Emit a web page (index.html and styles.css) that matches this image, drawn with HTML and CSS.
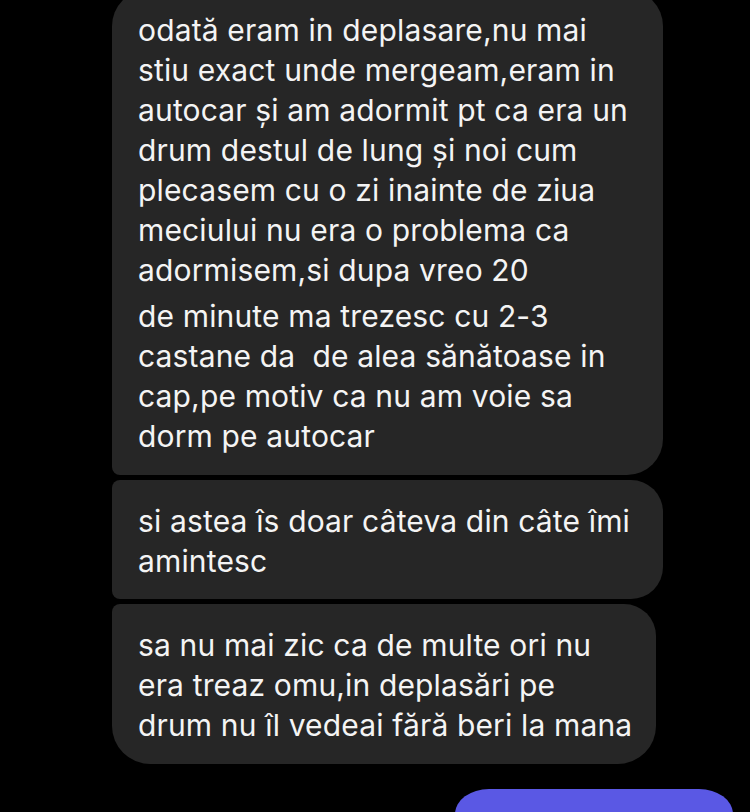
FILE: index.html
```html
<!DOCTYPE html>
<html lang="ro">
<head>
<meta charset="utf-8">
<link rel="stylesheet" href="styles.css">
</head>
<body>
<div class="thread">
  <div class="bubble first wide">odată eram in deplasare,nu mai<br>stiu exact unde mergeam,eram in<br>autocar și am adormit pt ca era un<br>drum destul de lung și noi cum<br>plecasem cu o zi inainte de ziua<br>meciului nu era o problema ca<br>adormisem,si dupa vreo 20<span class="gapline">de minute ma trezesc cu 2-3</span>castane da&nbsp; de alea sănătoase in<br>cap,pe motiv ca nu am voie sa<br>dorm pe autocar</div>
  <div class="bubble middle wide">si astea îs doar câteva din câte îmi<br>amintesc</div>
  <div class="bubble last">sa nu mai zic ca de multe ori nu<br>era treaz omu,in deplasări pe<br>drum nu îl vedeai fără beri la mana</div>
  <div class="mine"></div>
</div>
</body>
</html>
```
FILE: styles.css
```css
html, body {
  margin: 0;
  padding: 0;
  background: #000;
  overflow: hidden;
  height: 812px;
}
.thread {
  display: flex;
  flex-direction: column;
  align-items: flex-start;
  gap: 5px;
  padding-left: 112px;
  font-family: Inter, "Noto Sans", sans-serif;
  font-size: 30px;
  letter-spacing: 0.15px;
  line-height: 40px;
  color: #f4f4f4;
}
.bubble {
  background: #262626;
  padding: 20px 26px;
  white-space: nowrap;
  box-sizing: border-box;
}
.wide { width: 551px; }
.first {
  margin-top: -10px;
  padding-bottom: 19px;
  border-radius: 36px 36px 36px 8px;
}
.middle {
  padding-top: 21px;
  padding-bottom: 18px;
  border-radius: 8px 32px 32px 8px;
}
.last {
  padding-top: 21px;
  padding-right: 24px;
  padding-bottom: 19px;
  border-radius: 8px 32px 38px 38px;
}
.gapline {
  display: block;
  margin-top: 6px;
}
.mine {
  margin-top: 20px;
  margin-left: 343px;
  width: 278px;
  height: 25px;
  background: #5a58e4;
  border-radius: 34px 34px 0 0 / 25px 25px 0 0;
}
```
